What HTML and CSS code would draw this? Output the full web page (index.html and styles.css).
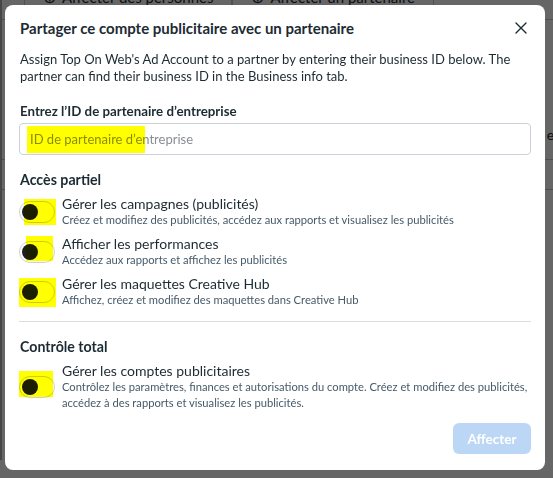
FILE: index.html
```html
<!DOCTYPE html>
<html lang="fr">
<head>
<meta charset="UTF-8" />
<meta name="viewport" content="width=device-width, initial-scale=1" />
<title>Partenaires – Comptes publicitaires</title>
<link rel="stylesheet" href="styles.css">
</head>
<body>
<div class="page">
  <div class="toolbar">
    <button class="tool-btn" type="button"><span class="tool-icon">&#8853;</span>Affecter des personnes</button>
    <button class="tool-btn" type="button"><span class="tool-icon">&#8853;</span>Affecter un partenaire</button>
  </div>
  <div class="table">
    <div class="table-row table-row--tall"><span></span><span class="cell-right">Gérer et</span></div>
    <div class="table-row"><span></span><span class="cell-right"></span></div>
  </div>
</div>

<div class="backdrop">
  <div class="dialog" role="dialog" aria-labelledby="dialog-title">
    <header class="dialog-header">
      <h2 id="dialog-title">Partager ce compte publicitaire avec un partenaire</h2>
      <button class="close-btn" type="button" aria-label="Fermer">
        <svg width="12" height="12" viewBox="0 0 12 12" aria-hidden="true">
          <path d="M1 1 L11 11 M11 1 L1 11" stroke="#1c2b33" stroke-width="1.4" stroke-linecap="round" fill="none"/>
        </svg>
      </button>
    </header>

    <div class="dialog-body">
      <p class="intro">Assign Top On Web's Ad Account to a partner by entering their business ID below. The partner can find their business ID in the Business info tab.</p>

      <label class="field-label" for="partner-id">Entrez l’ID de partenaire d’entreprise</label>
      <div class="field">
        <input id="partner-id" type="text" placeholder="ID de partenaire d’entreprise">
        <span class="mark mark--field"></span>
      </div>

      <h3 class="section-title">Accès partiel</h3>
      <div class="perm">
        <div class="switch-cell">
          <span class="switch"></span>
          <span class="mark mark--1"></span>
        </div>
        <div class="perm-text">
          <div class="perm-name">Gérer les campagnes (publicités)</div>
          <div class="perm-desc">Créez et modifiez des publicités, accédez aux rapports et visualisez les publicités</div>
        </div>
      </div>
      <div class="perm">
        <div class="switch-cell">
          <span class="switch"></span>
          <span class="mark mark--2"></span>
        </div>
        <div class="perm-text">
          <div class="perm-name">Afficher les performances</div>
          <div class="perm-desc">Accédez aux rapports et affichez les publicités</div>
        </div>
      </div>
      <div class="perm">
        <div class="switch-cell">
          <span class="switch"></span>
          <span class="mark mark--3"></span>
        </div>
        <div class="perm-text">
          <div class="perm-name">Gérer les maquettes Creative Hub</div>
          <div class="perm-desc">Affichez, créez et modifiez des maquettes dans Creative Hub</div>
        </div>
      </div>

      <hr class="divider">

      <h3 class="section-title">Contrôle total</h3>
      <div class="perm perm--full">
        <div class="switch-cell">
          <span class="switch"></span>
          <span class="mark mark--4"></span>
        </div>
        <div class="perm-text">
          <div class="perm-name">Gérer les comptes publicitaires</div>
          <div class="perm-desc">Contrôlez les paramètres, finances et autorisations du compte. Créez et modifiez des publicités, accédez à des rapports et visualisez les publicités.</div>
        </div>
      </div>
    </div>

    <footer class="dialog-footer">
      <button class="primary-btn" type="button" disabled>Affecter</button>
    </footer>
  </div>
</div>
</body>
</html>
```

FILE: styles.css
```css
:root {
  --text: #1c2b33;
  --text-secondary: #465a69;
  --border: #cbd2d9;
  --placeholder: #8a8d91;
  --font: 'Lato', 'Liberation Sans', sans-serif;
}

*, *::before, *::after {
  box-sizing: border-box;
}

html, body {
  margin: 0;
  height: 100%;
  overflow: hidden;
  font-family: var(--font);
  color: var(--text);
  background: #fff;
}

/* Page behind the dialog */
.page {
  border-left: 2px solid #b0b0b0;
  height: 100%;
}
.toolbar {
  display: flex;
  margin-top: -18px;
  padding-left: 22px;
  height: 38px;
  border-bottom: 1px solid #c9c9c9;
}
.tool-btn {
  display: flex;
  align-items: center;
  gap: 6px;
  height: 30px;
  padding: 0 18px;
  background: #fff;
  border: 1px solid #c9c9c9;
  font-family: var(--font);
  font-size: 15px;
  color: var(--text);
}
.tool-icon {
  font-size: 16px;
}
.table-row {
  display: flex;
  justify-content: space-between;
  align-items: flex-end;
  height: 30px;
  border-bottom: 1px solid #c9c9c9;
}
.table-row--tall {
  height: 140px;
  padding-bottom: 16px;
}
.cell-right {
  font-size: 14px;
  margin-right: -6px;
}

/* Dimmed overlay + dialog */
.backdrop {
  position: fixed;
  inset: 0;
  background: rgba(0, 0, 0, 0.6);
  padding: 5px 0 0 5px;
}
.dialog {
  width: 540px;
  height: 465px;
  background: #fff;
  border-radius: 8px;
  display: flex;
  flex-direction: column;
}

.dialog-header {
  display: flex;
  align-items: center;
  justify-content: space-between;
  padding: 13px 18px 0 15px;
}
.dialog-header h2 {
  margin: 0;
  font-size: 15px;
  line-height: 20px;
  font-weight: 700;
}
.close-btn {
  display: flex;
  padding: 0;
  border: 0;
  background: none;
  cursor: pointer;
}

.dialog-body {
  padding: 0 14px;
  flex: 1;
}
.intro {
  margin: 13px 0 0;
  padding-left: 1px;
  font-size: 13px;
  line-height: 17px;
}
.field-label {
  display: block;
  margin-top: 17px;
  padding-left: 1px;
  font-size: 13.3px;
  line-height: 18px;
  font-weight: 700;
}
.field {
  position: relative;
  margin-top: 3px;
}
.field input {
  width: 100%;
  height: 32px;
  padding: 0 10px;
  border: 1px solid var(--border);
  border-radius: 4px;
  font-family: var(--font);
  font-size: 13px;
  color: var(--text);
  outline: none;
}
.field input::placeholder {
  color: var(--placeholder);
}

.section-title {
  margin: 15px 0 0;
  padding-left: 1px;
  font-size: 14.2px;
  line-height: 20px;
  font-weight: 700;
}

.perm {
  display: flex;
  align-items: center;
  gap: 7px;
  margin-top: 5px;
}
.perm + .perm {
  margin-top: 7px;
}
.perm--full {
  margin-top: 5px;
}
.switch-cell {
  position: relative;
  flex: none;
  width: 36px;
  height: 22px;
}
.switch {
  display: block;
  width: 36px;
  height: 22px;
  border: 1px solid #ccd0d5;
  border-radius: 11px;
  background: #fff;
  position: relative;
}
.switch::before {
  content: "";
  position: absolute;
  left: 2px;
  top: 2px;
  width: 16px;
  height: 16px;
  border-radius: 50%;
  background: #1c1e21;
}
.perm-name {
  font-size: 14px;
  line-height: 17px;
}
.perm-desc {
  font-size: 11.2px;
  line-height: 16px;
  color: var(--text-secondary);
}

.divider {
  margin: 13px 0 0;
  border: 0;
  border-top: 1px solid #dadde1;
}

.dialog-footer {
  display: flex;
  justify-content: flex-end;
  padding: 0 14px 16px;
}
.primary-btn {
  width: 78px;
  height: 31px;
  border: 0;
  border-radius: 6px;
  background: #bcd7f5;
  color: #fff;
  font-family: var(--font);
  font-size: 13.5px;
  font-weight: 700;
}

/* Highlighter strokes */
.mark {
  position: absolute;
  background: #ffff00;
  mix-blend-mode: multiply;
  pointer-events: none;
}
.mark--field { left: 8px; top: 3px; width: 118px; height: 27px; }
.mark--1 { left: 5px; top: -2px; width: 32px; height: 26px; }
.mark--2 { left: 7px; top: -5px; width: 27px; height: 25px; }
.mark--3 { left: 0; top: -3px; width: 37px; height: 29px; }
.mark--4 { left: 0; top: -5px; width: 34px; height: 26px; }
```
